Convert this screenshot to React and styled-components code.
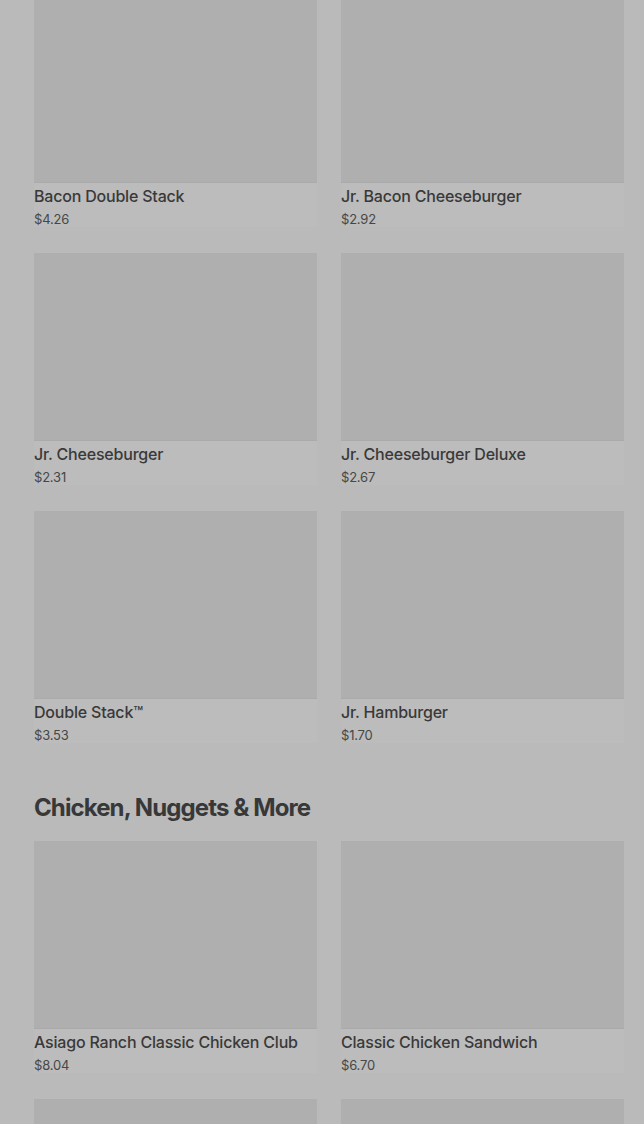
import React from "react";
import styled, { createGlobalStyle } from "styled-components";

const sections = [
  {
    title: null,
    items: [
      { name: "Bacon Double Stack", price: "$4.26" },
      { name: "Jr. Bacon Cheeseburger", price: "$2.92" },
      { name: "Jr. Cheeseburger", price: "$2.31" },
      { name: "Jr. Cheeseburger Deluxe", price: "$2.67" },
      { name: "Double Stack™", price: "$3.53" },
      { name: "Jr. Hamburger", price: "$1.70" },
    ],
  },
  {
    title: "Chicken, Nuggets & More",
    items: [
      { name: "Asiago Ranch Classic Chicken Club", price: "$8.04" },
      { name: "Classic Chicken Sandwich", price: "$6.70" },
      { name: "", price: "" },
      { name: "", price: "" },
    ],
  },
];

const App = () => {
  return (
    <>
      <GlobalStyle />
      <Page>
        {sections.map((section, i) => (
          <Section key={i}>
            {section.title && <SectionTitle>{section.title}</SectionTitle>}
            <Grid>
              {section.items.map((item, j) => (
                <Card key={j}>
                  <Thumb />
                  {item.name && (
                    <Info>
                      <Name>{item.name}</Name>
                      <Price>{item.price}</Price>
                    </Info>
                  )}
                </Card>
              ))}
            </Grid>
          </Section>
        ))}
      </Page>
    </>
  );
};

export default App;

const GlobalStyle = createGlobalStyle`
  body {
    margin: 0;
    background: #bababa;
    font-family: Inter, "Noto Sans", sans-serif;
    overflow: hidden;
  }
`;

const Page = styled.div`
  height: 1124px;
  overflow: hidden;
  padding: 0 20px 0 34px;
  display: flex;
  flex-direction: column;
  gap: 49px;
  & > :first-child {
    margin-top: -5px;
  }
`;

const Section = styled.section`
  display: flex;
  flex-direction: column;
  gap: 17px;
`;

const SectionTitle = styled.h2`
  margin: 0;
  font-size: 24px;
  line-height: 32px;
  font-weight: 700;
  letter-spacing: -0.9px;
  color: #383838;
`;

const Grid = styled.div`
  display: grid;
  grid-template-columns: 1fr 1fr;
  column-gap: 24px;
  row-gap: 26px;
`;

const Card = styled.div`
  background: #bcbcbc;
  display: flex;
  flex-direction: column;
`;

const Thumb = styled.div`
  height: 188px;
  flex-shrink: 0;
  background: #afafaf;
  border-bottom: 1px solid #aaaaaa;
  box-sizing: border-box;
`;

const Info = styled.div`
  display: flex;
  flex-direction: column;
  gap: 5px;
  margin-top: 3px;
`;

const Name = styled.div`
  font-size: 16px;
  line-height: 20px;
  font-weight: 500;
  letter-spacing: -0.2px;
  color: #393939;
`;

const Price = styled.div`
  font-size: 13px;
  line-height: 16px;
  letter-spacing: -0.2px;
  color: #474747;
`;
